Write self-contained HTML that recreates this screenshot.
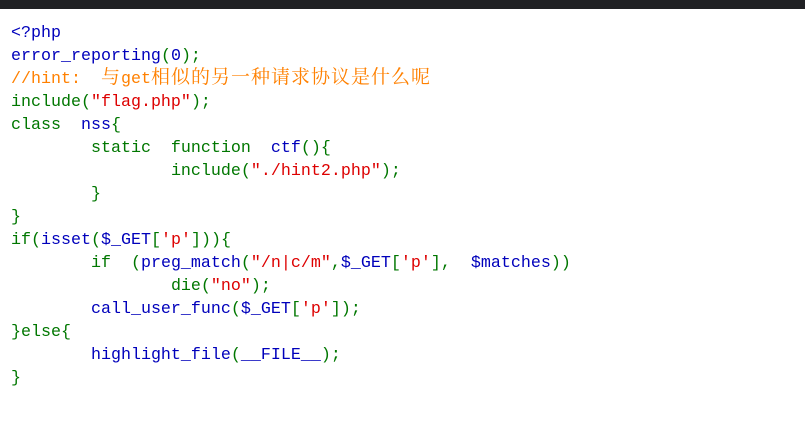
<!DOCTYPE html>
<html><head><meta charset="utf-8"><style>
html,body{margin:0;padding:0;background:#fff;width:805px;height:436px;overflow:hidden}
.bar{position:absolute;left:0;top:0;width:805px;height:9px;background:#202124}
pre{position:absolute;left:11px;top:22px;margin:0;font-family:"Liberation Mono","Noto Serif CJK SC",monospace;font-size:16.67px;line-height:23px;tab-size:8;-moz-tab-size:8;color:#000}
.b{color:#0000BB}.g{color:#007700}.o{color:#FF8000}.r{color:#DD0000}
.cj{font-family:"Noto Serif CJK SC",serif;font-size:19px;letter-spacing:1px;line-height:0}
</style></head><body><div class="bar"></div>
<pre><span class="b">&lt;?php</span>
<span class="b">error_reporting</span><span class="g">(</span><span class="b">0</span><span class="g">);</span>
<span class="o">//hint:  <span class="cj">与</span>get<span class="cj">相似的另一种请求协议是什么呢</span></span>
<span class="g">include(</span><span class="r">"flag.php"</span><span class="g">);</span>
<span class="g">class  </span><span class="b">nss</span><span class="g">{</span>
<span class="g">	static  function  </span><span class="b">ctf</span><span class="g">(){</span>
<span class="g">		include(</span><span class="r">"./hint2.php"</span><span class="g">);</span>
<span class="g">	}</span>
<span class="g">}</span>
<span class="g">if(</span><span class="b">isset</span><span class="g">(</span><span class="b">$_GET</span><span class="g">[</span><span class="r">'p'</span><span class="g">])){</span>
<span class="g">	if  (</span><span class="b">preg_match</span><span class="g">(</span><span class="r">"/n|c/m"</span><span class="g">,</span><span class="b">$_GET</span><span class="g">[</span><span class="r">'p'</span><span class="g">],  </span><span class="b">$matches</span><span class="g">))</span>
<span class="g">		die(</span><span class="r">"no"</span><span class="g">);</span>
<span class="g">	</span><span class="b">call_user_func</span><span class="g">(</span><span class="b">$_GET</span><span class="g">[</span><span class="r">'p'</span><span class="g">]);</span>
<span class="g">}else{</span>
<span class="g">	</span><span class="b">highlight_file</span><span class="g">(</span><span class="b">__FILE__</span><span class="g">);</span>
<span class="g">}</span></pre>
</body></html>
